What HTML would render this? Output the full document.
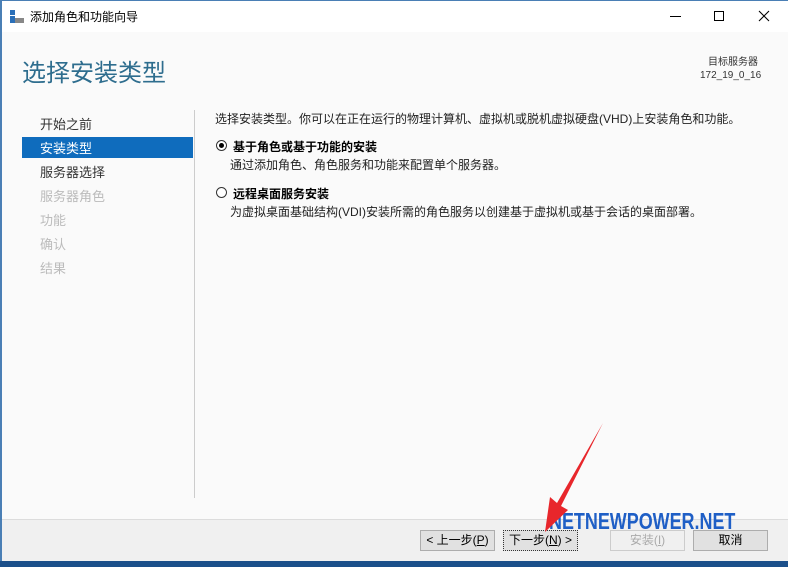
<!DOCTYPE html>
<html><head><meta charset="utf-8"><style>
*{margin:0;padding:0;box-sizing:border-box}
body{width:788px;height:567px;overflow:hidden;background:#fafafa;font-family:"Liberation Sans","Noto Sans CJK SC",sans-serif;position:relative;font-size:12px;color:#000}
.abs{position:absolute;white-space:nowrap}
.btn{position:absolute;top:530px;height:21px;border:1px solid #adadad;background:#e1e1e1;font-size:12px;text-align:center;line-height:19px}
</style></head><body>
<div class="abs" style="left:0;top:0;width:788px;height:32px;background:#fff;border-top:1px solid #4a7fb5"></div>
<div class="abs" style="left:0;top:0;width:2px;height:567px;background:#4a7fb5"></div>
<svg class="abs" style="left:9px;top:9px" width="16" height="16"><rect x="1" y="1" width="5" height="5" fill="#2a6fb8"/><rect x="1" y="7" width="5" height="7" fill="#2a6fb8"/><rect x="6" y="9" width="9" height="5" fill="#888"/></svg>
<div class="abs" style="left:30px;top:8px;font-size:12px">添加角色和功能向导</div>
<div class="abs" style="left:670px;top:16px;width:11px;height:1px;background:#000"></div>
<div class="abs" style="left:714px;top:11px;width:10px;height:10px;border:1px solid #000"></div>
<svg class="abs" style="left:758px;top:10px" width="12" height="12"><path d="M1 1L11 11M11 1L1 11" stroke="#000" stroke-width="1.1"/></svg>
<div class="abs" style="left:22px;top:53px;font-size:24px;color:#2e6d8e">选择安装类型</div>
<div class="abs" style="left:700px;top:56px;font-size:10px;color:#333;text-align:right;width:58px;line-height:13px">目标服务器<br>172_19_0_16</div>
<div class="abs" style="left:194px;top:110px;width:1px;height:388px;background:#ccc"></div>
<div class="abs" style="left:40px;top:114px;font-size:13px;color:#333">开始之前</div>
<div class="abs" style="left:22px;top:137px;width:171px;height:21px;background:#0f6cbd"></div>
<div class="abs" style="left:40px;top:138px;font-size:13px;color:#fff">安装类型</div>
<div class="abs" style="left:40px;top:162px;font-size:13px;color:#333">服务器选择</div>
<div class="abs" style="left:40px;top:186px;font-size:13px;color:#bbb">服务器角色</div>
<div class="abs" style="left:40px;top:210px;font-size:13px;color:#bbb">功能</div>
<div class="abs" style="left:40px;top:234px;font-size:13px;color:#bbb">确认</div>
<div class="abs" style="left:40px;top:258px;font-size:13px;color:#bbb">结果</div>
<div class="abs" style="left:215px;top:110px;font-size:12px;color:#222">选择安装类型。你可以在正在运行的物理计算机、虚拟机或脱机虚拟硬盘(VHD)上安装角色和功能。</div>
<div class="abs" style="left:216px;top:140px;width:11px;height:11px;border:1px solid #333;border-radius:50%;background:#fff"></div>
<div class="abs" style="left:219px;top:143px;width:5px;height:5px;border-radius:50%;background:#000"></div>
<div class="abs" style="left:233px;top:138px;font-weight:bold;font-size:12px">基于角色或基于功能的安装</div>
<div class="abs" style="left:230px;top:156px;font-size:12px;color:#222">通过添加角色、角色服务和功能来配置单个服务器。</div>
<div class="abs" style="left:216px;top:187px;width:11px;height:11px;border:1px solid #333;border-radius:50%;background:#fff"></div>
<div class="abs" style="left:233px;top:185px;font-weight:bold;font-size:12px">远程桌面服务安装</div>
<div class="abs" style="left:230px;top:203px;font-size:12px;color:#222">为虚拟桌面基础结构(VDI)安装所需的角色服务以创建基于虚拟机或基于会话的桌面部署。</div>
<div class="abs" style="left:2px;top:519px;width:786px;height:42px;background:#f0f0f0;border-top:1px solid #dcdcdc"></div>
<div class="abs" style="left:0;top:561px;width:788px;height:6px;background:#1b4f8a"></div>
<div class="btn" style="left:420px;width:75px">&lt; 上一步(<u>P</u>)</div>
<div class="btn" style="left:503px;width:75px;border-style:dotted;border-color:#333">下一步(<u>N</u>) &gt;</div>
<div class="btn" style="left:610px;width:75px;color:#aaa;background:#f0f0f0;border-color:#ccc">安装(<u>I</u>)</div>
<div class="btn" style="left:693px;width:75px">取消</div>
<div class="abs" style="left:549px;top:508px;font-size:23px;font-weight:bold;color:#1f5fc6;transform:scaleX(0.78);transform-origin:left">NETNEWPOWER.NET</div>
<svg class="abs" style="left:0;top:0" width="788" height="567"><polygon points="603,423 557,503 550,497 545,532 568,510 561,506" fill="#e8262b"/></svg>
</body></html>
